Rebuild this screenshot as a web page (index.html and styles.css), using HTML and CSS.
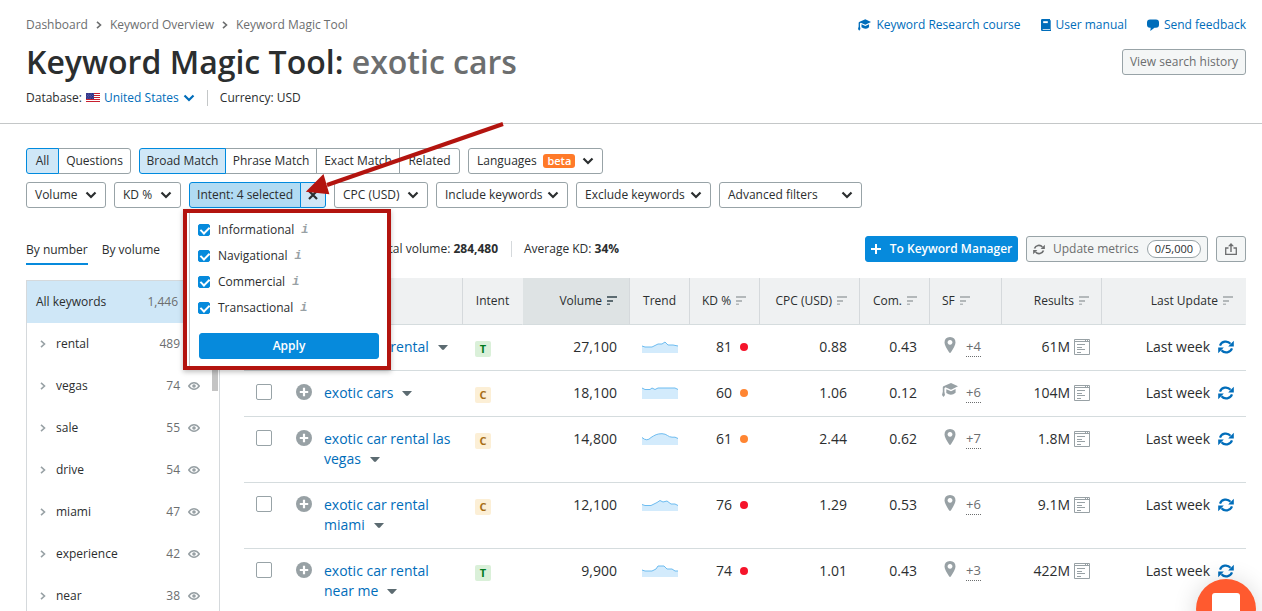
FILE: index.html
```html
<!DOCTYPE html>
<html lang="en">
<head>
<meta charset="utf-8">
<meta name="viewport" content="width=device-width, initial-scale=1">
<title>Keyword Magic Tool: exotic cars</title>
<link rel="stylesheet" href="styles.css">
</head>
<body>
<svg class="sprite" aria-hidden="true">
  <symbol id="chev" viewBox="0 0 12 8"><path d="M1.500 1.500 6 6l4.500-4.500" fill="none" stroke="currentColor" stroke-width="2.200"/></symbol>
  <symbol id="right" viewBox="0 0 6 8"><path d="M1 .8 4.500 4 1 7.200" fill="none" stroke="currentColor" stroke-width="1.600"/></symbol>
  <symbol id="caret" viewBox="0 0 10 5"><path d="M0 0h10L6 4.500q-1 .8-2 0z" fill="currentColor"/></symbol>
  <symbol id="sort" viewBox="0 0 10 9"><path d="M0 0h10v2H0zM0 4h6v2H0zM0 7.500h3V9.500H0z" fill="currentColor"/></symbol>
  <symbol id="cap" viewBox="0 0 16 14"><path d="M9 0l7 3.300-7 3.500-5.600-2.500-1 .9v3.600l.6 3.200-1.500 2-1.500-2 .8-3.200V4.200q0-.9 1.200-1.300z" fill="currentColor"/><path d="M4.300 6.200 9 8.300l4.600-2.200v3.700Q9 13.500 4.300 9.900z" fill="currentColor"/></symbol>
  <symbol id="book" viewBox="0 0 10 12"><path d="M1.200 0H9v10.200H1.700v.8H9.300V1.200h.7V12H1.200Q0 12 0 10.800V1.200Q0 0 1.200 0z" fill="currentColor"/><path d="M2.200 2.200h4.600v1.900H2.200z" fill="#fff"/></symbol>
  <symbol id="bubble" viewBox="0 0 12 12"><path d="M3 .5h6q3 0 3 3v2.300q0 3-3 3H7.500L3.300 12l.4-3.200H3q-3 0-3-3V3.500q0-3 3-3z" fill="currentColor"/></symbol>
  <symbol id="sync" viewBox="0 0 16 14"><path d="M2 5.600C3.500 1.200 9.500.2 12.500 3.700M14 8.400c-1.500 4.400-7.500 5.400-10.500 1.900" fill="none" stroke="currentColor" stroke-width="2.200"/><path d="M15.800.8v5.600h-5.600zM.2 13.200V7.600h5.600z" fill="currentColor"/></symbol>
  <symbol id="export" viewBox="0 0 12 12"><path d="M3.500 5H.7v6.300h10.600V5H8.500" fill="none" stroke="currentColor" stroke-width="1.300"/><path d="M6 0l3 3.300H6.700V9H5.300V3.300H3z" fill="currentColor"/></symbol>
  <symbol id="eye" viewBox="0 0 12 8"><path d="M.7 4Q3 .8 6 .8T11.300 4Q9 7.200 6 7.200T.7 4z" fill="none" stroke="currentColor" stroke-width="1.400"/><circle cx="6" cy="4" r="1.800" fill="currentColor"/></symbol>
  <symbol id="plus" viewBox="0 0 16 16"><circle cx="8" cy="8" r="8" fill="#98a1a5"/><path d="M8 3.800v8.400M3.800 8h8.400" stroke="#fff" stroke-width="2.200"/></symbol>
  <symbol id="pin" viewBox="0 0 12 16"><path fill-rule="evenodd" d="M6 0q5.500.3 5.500 5.600Q11.300 9 6.800 15.500q-.8.800-1.600 0Q.7 9 .5 5.600.5.300 6 0zM6 3a2.400 2.400 0 1 0 .01 0z" fill="currentColor"/></symbol>
  <symbol id="serp" viewBox="0 0 16 16"><path d="M.5.5h15v15H.5zM.5 2.500h15M11.500.5v2M13.500.5v2M3 5.500h8M3 8.500h5M3 10.500h8M3 13.500h4" fill="none" stroke="currentColor"/></symbol>
</svg>

<div class="page">
  <header class="head">
    <div class="bar">
      <nav class="crumbs" aria-label="Breadcrumb">
        <a href="#">Dashboard</a><svg class="i-right"><use href="#right"/></svg>
        <a href="#">Keyword Overview</a><svg class="i-right"><use href="#right"/></svg>
        <a href="#">Keyword Magic Tool</a>
      </nav>
      <nav class="help" aria-label="Help">
        <a href="#"><svg class="i-cap"><use href="#cap"/></svg>Keyword Research course</a>
        <a href="#"><svg class="i-book"><use href="#book"/></svg>User manual</a>
        <a href="#"><svg class="i-bubble"><use href="#bubble"/></svg>Send feedback</a>
      </nav>
    </div>
    <div class="bar title-bar">
      <h1>Keyword Magic Tool: <span>exotic cars</span></h1>
      <button class="btn soft history" type="button">View search history</button>
    </div>
    <div class="db">
      <span>Database:</span>
      <svg class="flag" viewBox="0 0 14 10"><path fill="#fff" d="M0 0h14v10H0z"/><path stroke="#c8202f" stroke-width="1" d="M0 .5h14M0 2.500h14M0 4.500h14M0 6.500h14M0 8.500h14"/><path fill="#2b2f86" d="M0 0h8v6H0z"/><path stroke="#a9acd8" stroke-width=".6" stroke-dasharray=".6 1" d="M.6 1h7M1.200 2.400h6.500M.6 3.800h7M1.200 5.200h6.500"/></svg>
      <button class="country" type="button">United States<svg class="i-chev"><use href="#chev"/></svg></button>
      <span class="currency">Currency: USD</span>
    </div>
  </header>

  <section class="filters" aria-label="Filters">
    <div class="frow">
      <div class="group">
        <button class="btn on w-all" type="button">All</button><button class="btn w-questions" type="button">Questions</button>
      </div>
      <div class="group">
        <button class="btn on w-broad" type="button">Broad Match</button><button class="btn w-phrase" type="button">Phrase Match</button><button class="btn w-exact" type="button">Exact Match</button><button class="btn w-related" type="button">Related</button>
      </div>
      <button class="btn drop w-lang" type="button">Languages <span class="beta">beta</span><svg class="i-chev"><use href="#chev"/></svg></button>
    </div>
    <div class="frow">
      <button class="btn drop w-volume" type="button">Volume<svg class="i-chev"><use href="#chev"/></svg></button>
      <button class="btn drop w-kd" type="button">KD %<svg class="i-chev"><use href="#chev"/></svg></button>
      <div class="group intent">
        <button class="btn on picked" type="button" aria-expanded="true">Intent: 4 selected</button><button class="btn on clear" type="button" aria-label="Clear intent"><svg class="i-x" viewBox="0 0 10 10"><path d="M1 1l8 8M9 1 1 9" stroke="currentColor" stroke-width="2.200"/></svg></button>
        <div class="callout">
          <form class="menu">
            <label><input type="checkbox" checked>Informational<i>i</i></label>
            <label><input type="checkbox" checked>Navigational<i>i</i></label>
            <label><input type="checkbox" checked>Commercial<i>i</i></label>
            <label><input type="checkbox" checked>Transactional<i>i</i></label>
            <button class="btn primary" type="button">Apply</button>
          </form>
        </div>
        <svg class="arrow" viewBox="0 0 198 76"><path d="M196 3 20 64" stroke="#b3140f" stroke-width="4"/><path d="M1 70 16 55 21 72z" fill="#b3140f" stroke="#b3140f" stroke-width="2"/></svg>
      </div>
      <button class="btn drop w-cpc" type="button">CPC (USD)<svg class="i-chev"><use href="#chev"/></svg></button>
      <button class="btn drop w-inc" type="button">Include keywords<svg class="i-chev"><use href="#chev"/></svg></button>
      <button class="btn drop w-exc" type="button">Exclude keywords<svg class="i-chev"><use href="#chev"/></svg></button>
      <button class="btn drop w-adv" type="button">Advanced filters<svg class="i-chev"><use href="#chev"/></svg></button>
    </div>
  </section>

  <main class="main">
    <aside class="side">
      <div class="tabs"><button class="tab active" type="button">By number</button><button class="tab" type="button">By volume</button></div>
      <div class="list">
        <ul>
          <li class="all"><span class="name">All keywords</span><span>1,446</span></li>
          <li><svg class="i-right"><use href="#right"/></svg><span class="name">rental</span><span>489</span><svg class="i-eye"><use href="#eye"/></svg></li>
          <li><svg class="i-right"><use href="#right"/></svg><span class="name">vegas</span><span>74</span><svg class="i-eye"><use href="#eye"/></svg></li>
          <li><svg class="i-right"><use href="#right"/></svg><span class="name">sale</span><span>55</span><svg class="i-eye"><use href="#eye"/></svg></li>
          <li><svg class="i-right"><use href="#right"/></svg><span class="name">drive</span><span>54</span><svg class="i-eye"><use href="#eye"/></svg></li>
          <li><svg class="i-right"><use href="#right"/></svg><span class="name">miami</span><span>47</span><svg class="i-eye"><use href="#eye"/></svg></li>
          <li><svg class="i-right"><use href="#right"/></svg><span class="name">experience</span><span>42</span><svg class="i-eye"><use href="#eye"/></svg></li>
          <li><svg class="i-right"><use href="#right"/></svg><span class="name">near</span><span>38</span><svg class="i-eye"><use href="#eye"/></svg></li>
        </ul>
        <span class="thumb"></span>
      </div>
    </aside>

    <section class="results">
      <div class="tools">
        <p class="stat total">Total volume: <b>284,480</b></p>
        <p class="stat kdavg">Average KD: <b>34%</b></p>
        <div class="actions">
          <button class="btn primary" type="button"><svg class="i-add" viewBox="0 0 10 10"><path d="M5 0v10M0 5h10" stroke="currentColor" stroke-width="2"/></svg>To Keyword Manager</button>
          <button class="btn soft update" type="button"><svg class="i-sync"><use href="#sync"/></svg>Update metrics<span class="quota">0/5,000</span></button>
          <button class="btn soft export" type="button" aria-label="Export"><svg class="i-export"><use href="#export"/></svg></button>
        </div>
      </div>
      <table>
        <colgroup><col class="c-check"><col class="c-plus"><col><col class="c-intent"><col class="c-vol"><col class="c-trend"><col class="c-kd"><col class="c-cpc"><col class="c-com"><col class="c-sf"><col class="c-res"><col class="c-last"></colgroup>
        <thead><tr>
          <th class="nb"></th><th class="nb"></th><th></th>
          <th class="ctr nb">Intent</th>
          <th class="num sorted nb">Volume<svg class="i-sort"><use href="#sort"/></svg></th>
          <th class="ctr">Trend</th>
          <th>KD %<svg class="i-sort"><use href="#sort"/></svg></th>
          <th class="num">CPC (USD)<svg class="i-sort"><use href="#sort"/></svg></th>
          <th class="num">Com.<svg class="i-sort"><use href="#sort"/></svg></th>
          <th>SF<svg class="i-sort"><use href="#sort"/></svg></th>
          <th class="num">Results<svg class="i-sort"><use href="#sort"/></svg></th>
          <th class="num nb">Last Update<svg class="i-sort"><use href="#sort"/></svg></th>
        </tr></thead>
        <tbody>
          <tr>
            <td><input type="checkbox" aria-label="Select exotic car rental"></td>
            <td><svg class="i-plus"><use href="#plus"/></svg></td>
            <td class="kw"><a href="#">exotic car rental</a><svg class="i-caret"><use href="#caret"/></svg></td>
            <td><span class="tag t">T</span></td><td class="num">27,100</td>
            <td><svg class="trend" viewBox="0 0 36 12"><path class="area" d="M0 5l3 1h7l6-3h4l3-2 3 3h5l5 1v7H0z"/><path class="line" d="M0 5l3 1h7l6-3h4l3-2 3 3h5l5 1"/></svg></td>
            <td class="kd">81<span class="dot red"></span></td><td class="num">0.88</td><td class="num">0.43</td>
            <td><div class="sf"><svg class="i-pin"><use href="#pin"/></svg><span>+4</span></div></td>
            <td><div class="end"><span>61M</span><svg class="i-serp"><use href="#serp"/></svg></div></td>
            <td><div class="end wide"><span>Last week</span><svg class="i-re"><use href="#sync"/></svg></div></td>
          </tr>
          <tr>
            <td><input type="checkbox" aria-label="Select exotic cars"></td>
            <td><svg class="i-plus"><use href="#plus"/></svg></td>
            <td class="kw"><a href="#">exotic cars</a><svg class="i-caret"><use href="#caret"/></svg></td>
            <td><span class="tag c">C</span></td><td class="num">18,100</td>
            <td><svg class="trend" viewBox="0 0 36 12"><path class="area" d="M0 1l3 1.500h5l2-1.500 3 1.500L16 1h17l3 1.500V12H0z"/><path class="line" d="M0 1l3 1.500h5l2-1.500 3 1.500L16 1h17l3 1.500"/></svg></td>
            <td class="kd">60<span class="dot"></span></td><td class="num">1.06</td><td class="num">0.12</td>
            <td><div class="sf"><svg class="i-grad"><use href="#cap"/></svg><span>+6</span></div></td>
            <td><div class="end"><span>104M</span><svg class="i-serp"><use href="#serp"/></svg></div></td>
            <td><div class="end wide"><span>Last week</span><svg class="i-re"><use href="#sync"/></svg></div></td>
          </tr>
          <tr>
            <td><input type="checkbox" aria-label="Select exotic car rental las vegas"></td>
            <td><svg class="i-plus"><use href="#plus"/></svg></td>
            <td class="kw"><a href="#">exotic car rental las vegas</a><svg class="i-caret"><use href="#caret"/></svg></td>
            <td><span class="tag c">C</span></td><td class="num">14,800</td>
            <td><svg class="trend" viewBox="0 0 36 12"><path class="area" d="M0 4.500Q5 9 9 4.500C13 2 15 .7 20 .7s6 3.500 10 3.500h3l3 1.300V12H0z"/><path class="line" d="M0 4.500Q5 9 9 4.500C13 2 15 .7 20 .7s6 3.500 10 3.500h3l3 1.300"/></svg></td>
            <td class="kd">61<span class="dot"></span></td><td class="num">2.44</td><td class="num">0.62</td>
            <td><div class="sf"><svg class="i-pin"><use href="#pin"/></svg><span>+7</span></div></td>
            <td><div class="end"><span>1.8M</span><svg class="i-serp"><use href="#serp"/></svg></div></td>
            <td><div class="end wide"><span>Last week</span><svg class="i-re"><use href="#sync"/></svg></div></td>
          </tr>
          <tr>
            <td><input type="checkbox" aria-label="Select exotic car rental miami"></td>
            <td><svg class="i-plus"><use href="#plus"/></svg></td>
            <td class="kw"><a href="#">exotic car rental miami</a><svg class="i-caret"><use href="#caret"/></svg></td>
            <td><span class="tag c">C</span></td><td class="num">12,100</td>
            <td><svg class="trend" viewBox="0 0 36 12"><path class="area" d="M0 5.500l3 1h6l6-3 3-2 3 1.500 4-1 4 3h4l3 1.500V12H0z"/><path class="line" d="M0 5.500l3 1h6l6-3 3-2 3 1.500 4-1 4 3h4l3 1.500"/></svg></td>
            <td class="kd">76<span class="dot red"></span></td><td class="num">1.29</td><td class="num">0.53</td>
            <td><div class="sf"><svg class="i-pin"><use href="#pin"/></svg><span>+6</span></div></td>
            <td><div class="end"><span>9.1M</span><svg class="i-serp"><use href="#serp"/></svg></div></td>
            <td><div class="end wide"><span>Last week</span><svg class="i-re"><use href="#sync"/></svg></div></td>
          </tr>
          <tr>
            <td><input type="checkbox" aria-label="Select exotic car rental near me"></td>
            <td><svg class="i-plus"><use href="#plus"/></svg></td>
            <td class="kw"><a href="#">exotic car rental near me</a><svg class="i-caret"><use href="#caret"/></svg></td>
            <td><span class="tag t">T</span></td><td class="num">9,900</td>
            <td><svg class="trend" viewBox="0 0 36 12"><path class="area" d="M0 5l3 1h7l4-2 2-3h6l3 3h5l3 2h3v6H0z"/><path class="line" d="M0 5l3 1h7l4-2 2-3h6l3 3h5l3 2h3"/></svg></td>
            <td class="kd">74<span class="dot red"></span></td><td class="num">1.01</td><td class="num">0.43</td>
            <td><div class="sf"><svg class="i-pin"><use href="#pin"/></svg><span>+3</span></div></td>
            <td><div class="end"><span>422M</span><svg class="i-serp"><use href="#serp"/></svg></div></td>
            <td><div class="end wide"><span>Last week</span><svg class="i-re"><use href="#sync"/></svg></div></td>
          </tr>
        </tbody>
      </table>
    </section>
  </main>
</div>
<button class="chat" type="button" aria-label="Open chat"><span></span></button>
</body>
</html>
```

FILE: styles.css
```css
* { box-sizing: border-box; }
html, body { height: 100%; margin: 0; overflow: hidden; }
body {
  background: #fff;
  color: #2b2e2f;
  font: 12px/16px "Open Sans", "Noto Sans", sans-serif;
}
a { color: #006dba; text-decoration: none; }
button { font: inherit; color: inherit; cursor: pointer; }
svg { flex: none; overflow: visible; }
.sprite { position: absolute; width: 0; height: 0; }

/* Header */
.head { padding: 17px 16px 17px 26px; border-bottom: 1px solid #c4c7c8; }
.bar { display: flex; justify-content: space-between; align-items: center; }
.crumbs, .help, .help a, .db { display: flex; align-items: center; }
.crumbs { gap: 8px; }
.crumbs a { color: #6c6e6f; }
.crumbs svg { color: #6c6e6f; }
.help { gap: 20px; }
.help a { gap: 5px; font-weight: 500; }
.title-bar { margin-top: 7px; }
.history { width: 124px; }
h1 { margin: 0; font-size: 32px; line-height: 44px; font-weight: 600; }
h1 span { color: #6c6e6f; }
.db { margin-top: 6px; gap: 4px; }
.flag { width: 14px; height: 10px; }
.country { display: flex; align-items: center; gap: 4px; padding: 0; border: 0; background: none; color: #006dba; }
.currency { margin-left: 8px; padding-left: 12px; border-left: 1px solid #c4c7c8; }

/* Icon sizes */
.i-right { width: 6px; height: 8px; }
.i-chev { width: 12px; height: 8px; }
.i-x { width: 10px; height: 10px; }
.i-cap { width: 13px; height: 12px; }
.i-book { width: 10px; height: 12px; }
.i-bubble { width: 12px; height: 12px; }
.i-add { width: 10px; height: 10px; }
.i-sync { width: 12px; height: 11px; }
.i-export { width: 12px; height: 12px; }
.i-eye { width: 12px; height: 8px; color: #98a1a5; }
.i-sort { width: 10px; height: 9px; margin-left: 5px; color: #b3b8ba; }
.i-plus, .i-serp { display: block; width: 16px; height: 16px; }
.i-plus { margin-top: 1px; }
.i-pin { width: 16px; height: 16px; }
.i-grad { width: 16px; height: 14px; }
.i-re { width: 16px; height: 14px; color: #006dba; }
.i-caret { width: 10px; height: 5px; margin-left: 9px; vertical-align: 2px; color: #5c6b71; }

/* Buttons */
.btn {
  display: inline-flex; align-items: center; justify-content: center;
  height: 26px; padding: 0 8px;
  border: 1px solid #98a3a7; border-radius: 3px;
  background: #fff; white-space: nowrap;
}
.btn.soft { background: #f4f6f6; color: #6c6e6f; }
.btn.on { background: #cfe7f7; border-color: #008ade; position: relative; }
.btn.primary { background: #068adc; border-color: #068adc; color: #fff; font-weight: 600; }
.btn.drop { justify-content: space-between; }
.btn.on.picked { background: #b1dbf3; width: 112px; }
.btn.clear { width: 26px; padding: 0; }

/* Filters */
.filters { padding: 24px 16px 0 26px; }
.frow { display: flex; gap: 8px; }
.frow + .frow { margin-top: 8px; }
.group { display: flex; }
.group .btn + .btn { margin-left: -1px; border-top-left-radius: 0; border-bottom-left-radius: 0; }
.group .btn:has(+ .btn) { border-top-right-radius: 0; border-bottom-right-radius: 0; }
.intent { position: relative; }
.w-all { width: 33px; }
.w-questions { width: 73px; }
.w-broad { width: 87px; }
.w-phrase { width: 92px; }
.w-exact { width: 84px; }
.w-related { width: 61px; }
.w-lang { width: 135px; }
.w-volume { width: 80px; }
.w-kd { width: 67px; }
.w-cpc { width: 94px; }
.w-inc { width: 132px; }
.w-exc { width: 135px; }
.w-adv { width: 143px; }
.beta { padding: 0 4px; border-radius: 3px; background: #ff7a29; color: #fff; font-size: 11px; line-height: 14px; font-weight: 600; }

/* Intent menu */
.callout {
  position: absolute; z-index: 2; left: -6px; top: 27px; width: 208px;
  padding-left: 2px; border: 4px solid #b3140f; background: #fff;
  box-shadow: 0 2px 5px rgba(0, 0, 0, .25);
}
.menu { display: flex; flex-direction: column; padding: 4px 8px 7px; border-left: 1px solid #c4c7c8; }
.menu label { display: flex; align-items: center; height: 26px; }
.menu i { margin-left: 7px; color: #98a1a5; font: italic 700 12px/14px "Liberation Mono", monospace; }
.menu .btn { margin: 12px 0 0 1px; }
.arrow { position: absolute; z-index: 3; left: 118px; top: -61px; width: 198px; height: 76px; pointer-events: none; }

/* Tick boxes */
input[type="checkbox"] {
  appearance: none; display: block; position: relative;
  width: 16px; height: 16px; margin: 1px 0 0;
  border: 1px solid #98a3a7; border-radius: 2px; background: #fff;
}
.menu input[type="checkbox"] { width: 12px; height: 12px; margin: 0 8px 0 0; border-color: #068adc; background: #068adc; }
.menu input[type="checkbox"]::after {
  content: ""; position: absolute; left: 3px; top: 0; width: 4px; height: 7px;
  border: solid #fff; border-width: 0 2px 2px 0; transform: rotate(45deg);
}

/* Side list */
.main { display: flex; gap: 24px; padding: 28px 16px 0 26px; }
.side { flex: none; width: 194px; }
.tabs { display: flex; gap: 14px; height: 44px; align-items: flex-start; }
.tab { padding: 6px 0 5px; border: 0; border-bottom: 2px solid transparent; background: none; }
.tab.active { border-color: #068adc; }
.list { position: relative; border: 1px solid #d5d9dc; }
.list ul { margin: 0; padding: 0; list-style: none; }
.list li { display: flex; align-items: center; height: 42px; padding: 0 19px 0 13px; color: #6c6e6f; }
.list li.all { padding: 0 41px 0 9px; background: #cfe7f7; }
.list .name { flex: 1; color: #2b2e2f; }
.list .i-right { margin-right: 10px; color: #98a1a5; }
.list .i-eye { margin-left: 8px; }
.thumb { position: absolute; right: 1px; top: 42px; width: 6px; height: 68px; background: #c4c4c4; }

/* Results toolbar */
.results { flex: 1; min-width: 0; }
.tools { display: flex; align-items: center; height: 26px; margin-bottom: 16px; }
.stat { margin: 0; }
.stat b { font-weight: 700; }
.total { width: 268px; padding-right: 13px; border-right: 1px solid #d5d9dc; text-align: right; }
.kdavg { padding-left: 12px; }
.actions { display: flex; gap: 8px; margin-left: auto; }
.actions .primary { gap: 9px; width: 153px; }
.update { gap: 8px; width: 182px; }
.quota { padding: 0 7px; border: 1px solid #98a3a7; border-radius: 9px; background: #fff; color: #2b2e2f; font-size: 11px; line-height: 16px; }
.export { width: 30px; padding: 0; }

/* Results table */
table { width: 100%; table-layout: fixed; border-collapse: separate; border-spacing: 0; }
.c-check { width: 44px; }
.c-plus { width: 36px; }
.c-intent { width: 60px; }
.c-vol { width: 107px; }
.c-trend { width: 60px; }
.c-kd, .c-com { width: 70px; }
.c-cpc, .c-res { width: 100px; }
.c-sf { width: 72px; }
.c-last { width: 144px; }
th, td { padding: 0 12px; border-bottom: 1px solid #d5dcde; text-align: left; white-space: nowrap; }
th { height: 47px; border-right: 1px solid #d5d9dc; background: #eff1f2; font-weight: 400; }
th.nb { border-right-color: transparent; background-clip: border-box; }
th.sorted { background: #dee3e4; border-right-color: #d5d9dc; }
th.sorted .i-sort { color: #5c6b71; }
th.ctr { padding: 0; text-align: center; }
.num { text-align: right; }
td { padding-top: 12px; padding-bottom: 13px; vertical-align: top; font-size: 14px; line-height: 20px; }
td.num { padding-right: 13px; }
td:nth-child(2) { padding-left: 8px; }
td.kw { padding-left: 0; padding-right: 8px; white-space: normal; font-weight: 500; }
.tag { display: block; width: 16px; height: 16px; margin-top: 4px; border-radius: 2px; font-size: 11px; line-height: 16px; font-weight: 700; text-align: center; }
.tag.t { background: #daf0d9; color: #007a1e; }
.tag.c { background: #fcefd6; color: #a86e15; }
.trend { display: block; width: 36px; height: 12px; margin-top: 4px; }
.area { fill: #d3ebfc; }
.line { fill: none; stroke: #6dbcf0; stroke-width: 1; }
td.kd { padding-left: 26px; padding-right: 0; }
.dot { display: inline-block; width: 8px; height: 8px; margin-left: 8px; border-radius: 50%; background: #ff8532; vertical-align: 1px; }
.dot.red { background: #f5142b; }
.sf { display: flex; align-items: flex-start; gap: 8px; color: #98a1a5; }
.sf span { border-bottom: 1px dotted #6c6e6f; color: #6c6e6f; line-height: 19px; font-size: 13px; }
.end { display: flex; align-items: center; justify-content: flex-end; gap: 4px; }
.end .i-serp { color: #98a1a5; }
.end.wide { gap: 8px; }

/* Chat launcher */
.chat {
  position: fixed; right: 6px; bottom: -28px; width: 60px; height: 60px;
  display: flex; justify-content: center; padding: 14px 0 0;
  border: 0; border-radius: 50%; background: #ff5a2f;
  box-shadow: 0 2px 24px rgba(0, 0, 0, .16);
}
.chat span { width: 28px; height: 32px; border-radius: 3px; background: #fff; }
```
